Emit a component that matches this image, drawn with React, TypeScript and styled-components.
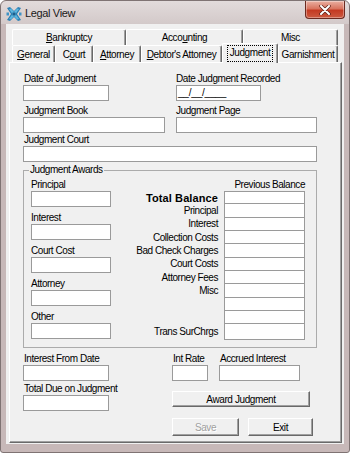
import React from 'react';
import styled, { createGlobalStyle } from 'styled-components';

const Global = createGlobalStyle`
  html, body { margin: 0; padding: 0; background: #ffffff; }
  body { font-family: "Liberation Sans", Arial, sans-serif; }
  * { box-sizing: border-box; }
`;

const Window = styled.div`
  width: 350px;
  height: 453px;
  border: 1px solid #7f7373;
  border-radius: 6px 6px 3px 3px;
  background: linear-gradient(#e2dbdb 0px, #d3c9c9 23px, #c7b8b8 23px);
  display: flex;
  flex-direction: column;
  overflow: hidden;
`;

const TitleBar = styled.div`
  height: 23px;
  flex: none;
  display: flex;
  align-items: flex-start;
  padding-left: 5px;
`;

const AppIconBox = styled.svg`
  margin-top: 5px;
  flex: none;
`;

const Title = styled.div`
  margin: 6px 0 0 3px;
  font-size: 11px;
  line-height: 13px;
  letter-spacing: -0.35px;
  color: #1a1a1a;
`;

const CloseButton = styled.div`
  margin-left: auto;
  margin-right: 4px;
  width: 40px;
  height: 18px;
  border: 1px solid #6b2a20;
  border-top: none;
  border-radius: 0 0 4px 4px;
  background: linear-gradient(#eab0a2 0%, #d8745f 45%, #c43a22 55%, #cc5a40 100%);
  box-shadow: inset 0 0 0 1px rgba(255, 255, 255, 0.35);
  display: flex;
  align-items: center;
  justify-content: center;
`;

const Client = styled.div`
  flex: 1;
  margin: 0 5px 8px 5px;
  background: #f0f0f0;
  padding: 5px 2px 1px 3px;
  display: flex;
  flex-direction: column;
`;

const TabRow = styled.div`
  display: flex;
  padding-left: 3px;
  height: ${(p) => p.$h}px;
  flex: none;
  position: relative;
`;

const Tab = styled.div`
  width: ${(p) => p.$w}px;
  height: ${(p) => (p.$selected ? p.$h + 3 : p.$h)}px;
  margin-top: ${(p) => (p.$selected ? -2 : 0)}px;
  position: relative;
  z-index: ${(p) => (p.$selected ? 2 : 1)};
  background: #f0f0f0;
  border-top: 1px solid #ffffff;
  border-left: 1px solid #ffffff;
  border-right: 1px solid #696969;
  box-shadow: inset -1px 0 0 #a0a0a0;
  border-radius: 2px 2px 0 0;
  display: flex;
  justify-content: center;
  align-items: ${(p) => (p.$selected ? 'flex-start' : 'center')};
  padding-top: ${(p) => (p.$selected ? 1 : 0)}px;
  font-size: 10px;
  letter-spacing: -0.4px;
  color: #000;
  white-space: nowrap;
  u { text-decoration: underline; text-underline-offset: 1px; }
`;

const FocusRect = styled.span`
  border: 1px dotted #000;
  padding: 1px 2px 2px 2px;
  line-height: 12px;
`;

const Panel = styled.div`
  flex: 1;
  border: 1px solid;
  border-color: #ffffff #696969 #696969 #ffffff;
  box-shadow: inset -1px -1px 0 #a0a0a0;
  background: #f0f0f0;
  padding: 10px 0 0 13px;
  display: flex;
  flex-direction: column;
`;

const FieldGrid = styled.div`
  display: grid;
  grid-template-columns: 153px 1fr;
  margin-top: ${(p) => p.$mt || 0}px;
`;

const Field = styled.div`
  display: flex;
  flex-direction: column;
  margin-top: ${(p) => p.$mt || 0}px;
`;

const Label = styled.div`
  font-size: 10px;
  line-height: 12px;
  height: 12px;
  letter-spacing: -0.45px;
  white-space: nowrap;
  color: #000;
  padding-left: ${(p) => (p.$indent ? 1 : 0)}px;
`;

const TextBox = styled.div`
  width: ${(p) => p.$w}px;
  height: 16px;
  border: 1px solid #9a9a9a;
  background: #ffffff;
  font-size: 10px;
  line-height: 14px;
  letter-spacing: -0.2px;
  padding-left: 1px;
  color: #000;
  white-space: nowrap;
`;

const GroupBox = styled.fieldset`
  margin: 2px 0 0 0;
  width: 294px;
  min-width: 0;
  border: 1px solid #ababab;
  padding: 3px 11px 7px 7px;
  display: flex;
`;

const Legend = styled.legend`
  padding: 0 1px;
  margin-left: -2px;
  font-size: 10px;
  line-height: 12px;
  letter-spacing: -0.45px;
  color: #000;
`;

const AwardColumn = styled.div`
  width: 80px;
  display: flex;
  flex-direction: column;
  gap: 5px;
`;

const BalanceGrid = styled.div`
  margin-left: auto;
  display: grid;
  grid-template-columns: 107px 81px;
  grid-template-rows: 12px repeat(10, 13.333px) 16px;
  column-gap: 6px;
`;

const BalanceHeader = styled.div`
  grid-column: 2;
  text-align: right;
  font-size: 10px;
  line-height: 12px;
  letter-spacing: -0.45px;
  white-space: nowrap;
`;

const BalanceLabel = styled.div`
  grid-column: 1;
  text-align: right;
  align-self: center;
  white-space: nowrap;
  color: #000;
  font-size: ${(p) => (p.$bold ? 11 : 10)}px;
  font-weight: ${(p) => (p.$bold ? 700 : 400)};
  letter-spacing: ${(p) => (p.$bold ? 0.1 : -0.45)}px;
  line-height: 12px;
`;

const BalanceBox = styled.div`
  grid-column: 2;
  background: #ffffff;
  border: 1px solid #9a9a9a;
  border-top-width: ${(p) => (p.$first ? 1 : 0)}px;
`;

const BottomArea = styled.div`
  display: flex;
  margin-top: 5px;
`;

const LeftColumn = styled.div`
  width: 149px;
  display: flex;
  flex-direction: column;
`;

const RightColumn = styled.div`
  display: flex;
  flex-direction: column;
  align-items: flex-start;
`;

const InlineFields = styled.div`
  display: grid;
  grid-template-columns: 47px auto;
`;

const Button = styled.div`
  width: ${(p) => p.$w}px;
  height: ${(p) => p.$h}px;
  margin-top: ${(p) => p.$mt || 0}px;
  margin-left: ${(p) => p.$ml || 0}px;
  background: #f0f0f0;
  border: 1px solid;
  border-color: #ffffff #696969 #696969 #ffffff;
  box-shadow: inset -1px -1px 0 #a0a0a0;
  display: flex;
  align-items: center;
  justify-content: center;
  font-size: 10px;
  letter-spacing: -0.4px;
  color: ${(p) => (p.$disabled ? '#a0a0a0' : '#000')};
  text-shadow: ${(p) => (p.$disabled ? '1px 1px 0 #ffffff' : 'none')};
  white-space: nowrap;
`;

const ButtonRow = styled.div`
  display: flex;
  margin-top: 11px;
`;

function AppIcon() {
  return (
    <AppIconBox width="16" height="16" viewBox="0 0 16 16">
      <rect x="0" y="0" width="16" height="16" fill="none" />
      <path d="M1 2 L4 1 L8 5 L12 1 L15 2 L11 8 L15 14 L12 15 L8 11 L4 15 L1 14 L5 8 Z" fill="#2b7fb4" />
      <path d="M3 3 L5 2.5 L8 6 L11 2.5 L13 3 L9.5 8 L13 13 L11 13.5 L8 10 L5 13.5 L3 13 L6.5 8 Z" fill="#5cb6de" />
      <rect x="6.5" y="6.5" width="3" height="3" fill="#1d5f8e" />
      <rect x="0.5" y="6.5" width="2.5" height="3" fill="#3e93c6" />
      <rect x="13" y="6.5" width="2.5" height="3" fill="#3e93c6" />
    </AppIconBox>
  );
}

function CloseGlyph() {
  return (
    <svg width="12" height="10" viewBox="0 0 12 10">
      <path d="M2 1 L10 9 M10 1 L2 9" stroke="#5a2118" strokeWidth="3.4" strokeLinecap="round" />
      <path d="M2 1 L10 9 M10 1 L2 9" stroke="#ffffff" strokeWidth="2" strokeLinecap="round" />
    </svg>
  );
}

const upperTabs = [
  { w: 114, label: <><u>B</u>ankruptcy</> },
  { w: 117, label: <>Acco<u>u</u>nting</> },
  { w: 95, label: <>Misc</> },
];

const lowerTabs = [
  { w: 43, label: <><u>G</u>eneral</> },
  { w: 38, label: <>C<u>o</u>urt</> },
  { w: 48, label: <><u>A</u>ttorney</> },
  { w: 81, label: <><u>D</u>ebtor's Attorney</> },
  { w: 56, label: <>Judgment</>, selected: true },
  { w: 60, label: <>Garnishment</> },
];

const awardFields = ['Principal', 'Interest', 'Court Cost', 'Attorney', 'Other'];

const balanceRows = [
  { label: 'Total Balance', bold: true },
  { label: 'Principal' },
  { label: 'Interest' },
  { label: 'Collection Costs' },
  { label: 'Bad Check Charges' },
  { label: 'Court Costs' },
  { label: 'Attorney Fees' },
  { label: 'Misc' },
  { label: '' },
  { label: '' },
  { label: 'Trans SurChrgs' },
];

export default function App() {
  return (
    <>
      <Global />
      <Window>
        <TitleBar>
          <AppIcon />
          <Title>Legal View</Title>
          <CloseButton>
            <CloseGlyph />
          </CloseButton>
        </TitleBar>
        <Client>
          <TabRow $h={16}>
            {upperTabs.map((t, i) => (
              <Tab key={i} $w={t.w} $h={16}>
                {t.label}
              </Tab>
            ))}
          </TabRow>
          <TabRow $h={17}>
            {lowerTabs.map((t, i) => (
              <Tab key={i} $w={t.w} $h={17} $selected={t.selected}>
                {t.selected ? <FocusRect>{t.label}</FocusRect> : t.label}
              </Tab>
            ))}
          </TabRow>
          <Panel>
            <FieldGrid>
              <Field>
                <Label $indent>Date of Judgment</Label>
                <TextBox $w={86} />
              </Field>
              <Field>
                <Label>Date Judgment Recorded</Label>
                <TextBox $w={85}>__/__/____</TextBox>
              </Field>
            </FieldGrid>
            <FieldGrid $mt={4}>
              <Field>
                <Label $indent>Judgment Book</Label>
                <TextBox $w={142} />
              </Field>
              <Field>
                <Label>Judgment Page</Label>
                <TextBox $w={141} />
              </Field>
            </FieldGrid>
            <Field $mt={1}>
              <Label $indent>Judgment Court</Label>
              <TextBox $w={294} />
            </Field>

            <GroupBox>
              <Legend>Judgment Awards</Legend>
              <AwardColumn>
                {awardFields.map((f) => (
                  <Field key={f}>
                    <Label>{f}</Label>
                    <TextBox $w={80} />
                  </Field>
                ))}
              </AwardColumn>
              <BalanceGrid>
                <BalanceHeader>Previous Balance</BalanceHeader>
                {balanceRows.map((r, i) => (
                  <React.Fragment key={i}>
                    <BalanceLabel $bold={r.bold} style={{ gridRow: i + 2 }}>
                      {r.label}
                    </BalanceLabel>
                    <BalanceBox $first={i === 0} style={{ gridRow: i + 2 }} />
                  </React.Fragment>
                ))}
              </BalanceGrid>
            </GroupBox>

            <BottomArea>
              <LeftColumn>
                <Field>
                  <Label $indent>Interest From Date</Label>
                  <TextBox $w={86} />
                </Field>
                <Field $mt={2}>
                  <Label $indent>Total Due on Judgment</Label>
                  <TextBox $w={86} />
                </Field>
              </LeftColumn>
              <RightColumn>
                <InlineFields>
                  <Field>
                    <Label $indent>Int Rate</Label>
                    <TextBox $w={36} />
                  </Field>
                  <Field>
                    <Label $indent>Accrued Interest</Label>
                    <TextBox $w={81} />
                  </Field>
                </InlineFields>
                <Button $w={138} $h={16} $mt={10}>Award Judgment</Button>
                <ButtonRow>
                  <Button $w={67} $h={18} $disabled>Save</Button>
                  <Button $w={65} $h={18} $ml={9}>Exit</Button>
                </ButtonRow>
              </RightColumn>
            </BottomArea>
          </Panel>
        </Client>
      </Window>
    </>
  );
}
